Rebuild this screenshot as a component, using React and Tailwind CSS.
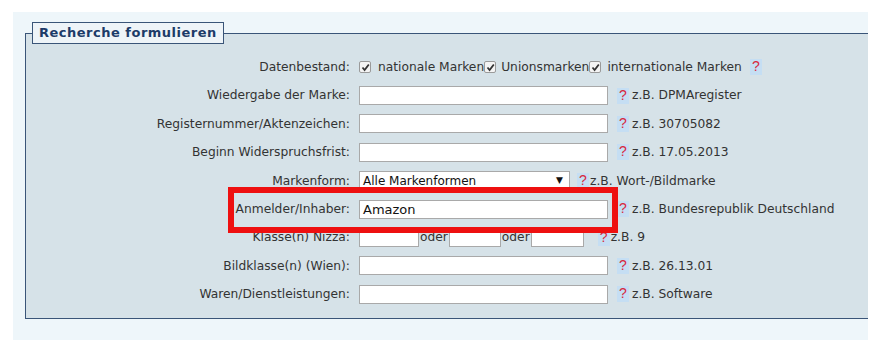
import React from 'react';

const Help = () => (
  <span className="inline-flex items-start justify-center w-[12px] h-[16px] bg-[#c5def3] text-[#d8283e] text-[14px] leading-[15px] font-['Liberation_Sans',sans-serif]">
    ?
  </span>
);

const Check = () => (
  <span className="inline-flex items-center justify-center w-[12px] h-[12px] border border-[#9a9a9a] bg-[#f4f4f4] rounded-[2px]">
    <svg width="9" height="9" viewBox="0 0 9 9">
      <path d="M1.5 4.5 L3.6 7 L7.8 1.5" fill="none" stroke="#333" strokeWidth="1.8" />
    </svg>
  </span>
);

const TextField = ({ value = '', w = 'w-[249px]' }) => (
  <div className={`${w} h-[19px] border border-[#a9a9a9] bg-white px-[3px] text-[13px] leading-[17px] text-[#111]`}>
    {value}
  </div>
);

const Row = ({ label, children }) => (
  <div className="flex items-center h-[28.4px]">
    <div className="w-[325px] text-right pr-[1px]">{label}</div>
    <div className="ml-[8px] flex items-center">{children}</div>
  </div>
);

const Hint = ({ text }) => (
  <span className="flex items-center ml-[9px]">
    <Help />
    <span className="ml-[3px]">{text}</span>
  </span>
);

export default function App() {
  return (
    <div className="w-[882px] h-[353px] bg-white pt-[12px] font-['DejaVu_Sans',Verdana,sans-serif] text-[12.25px] text-[#333]">
      <div className="ml-[13px] w-[855px] bg-[#eef6fa] pt-[21px] pl-[12px] pb-[21px]">
        <div className="relative border-t border-l border-b border-[#3a5578] bg-[#d6e2e8] pt-[19px] pb-[9px]">
          <div className="absolute -top-[12px] left-[6px] h-[22px] px-[6px] border border-[#3a5578] bg-[#eef4f8] text-[#1c3b68] font-bold text-[13px] leading-[20px] tracking-[0.5px]">
            Recherche formulieren
          </div>

          <Row label="Datenbestand:">
            <Check />
            <span className="ml-[7px]">nationale Marken</span>
            <Check />
            <span className="ml-[5px]">Unionsmarken</span>
            <Check />
            <span className="ml-[6px]">internationale Marken</span>
            <span className="ml-[8px]"><Help /></span>
          </Row>
          <Row label="Wiedergabe der Marke:">
            <TextField />
            <Hint text="z.B. DPMAregister" />
          </Row>
          <Row label="Registernummer/Aktenzeichen:">
            <TextField />
            <Hint text="z.B. 30705082" />
          </Row>
          <Row label="Beginn Widerspruchsfrist:">
            <TextField />
            <Hint text="z.B. 17.05.2013" />
          </Row>
          <Row label="Markenform:">
            <div className="w-[211px] h-[19px] border border-[#a9a9a9] bg-white pl-[3px] pr-[6px] flex items-center justify-between text-[12px] text-[#111]">
              <span>Alle Markenformen</span>
              <span className="text-[9px]">▼</span>
            </div>
            <span className="flex items-center ml-[7px]">
              <Help />
              <span className="ml-[1px]">z.B. Wort-/Bildmarke</span>
            </span>
          </Row>
          <Row label="Anmelder/Inhaber:">
            <TextField value="Amazon" />
            <Hint text="z.B. Bundesrepublik Deutschland" />
          </Row>
          <Row label="Klasse(n) Nizza:">
            <TextField w="w-[60px]" />
            <span className="mx-[1px]">oder</span>
            <TextField w="w-[52px]" />
            <span className="mx-[1px]">oder</span>
            <TextField w="w-[53px]" />
            <span className="flex items-center ml-[14px]">
              <Help />
              <span className="ml-[1px]">z.B. 9</span>
            </span>
          </Row>
          <Row label="Bildklasse(n) (Wien):">
            <TextField />
            <Hint text="z.B. 26.13.01" />
          </Row>
          <Row label="Waren/Dienstleistungen:">
            <TextField />
            <Hint text="z.B. Software" />
          </Row>

          <div className="absolute left-[202px] top-[153px] w-[390px] h-[46px] border-[6px] border-[#ee1010] pointer-events-none" />
        </div>
      </div>
    </div>
  );
}
